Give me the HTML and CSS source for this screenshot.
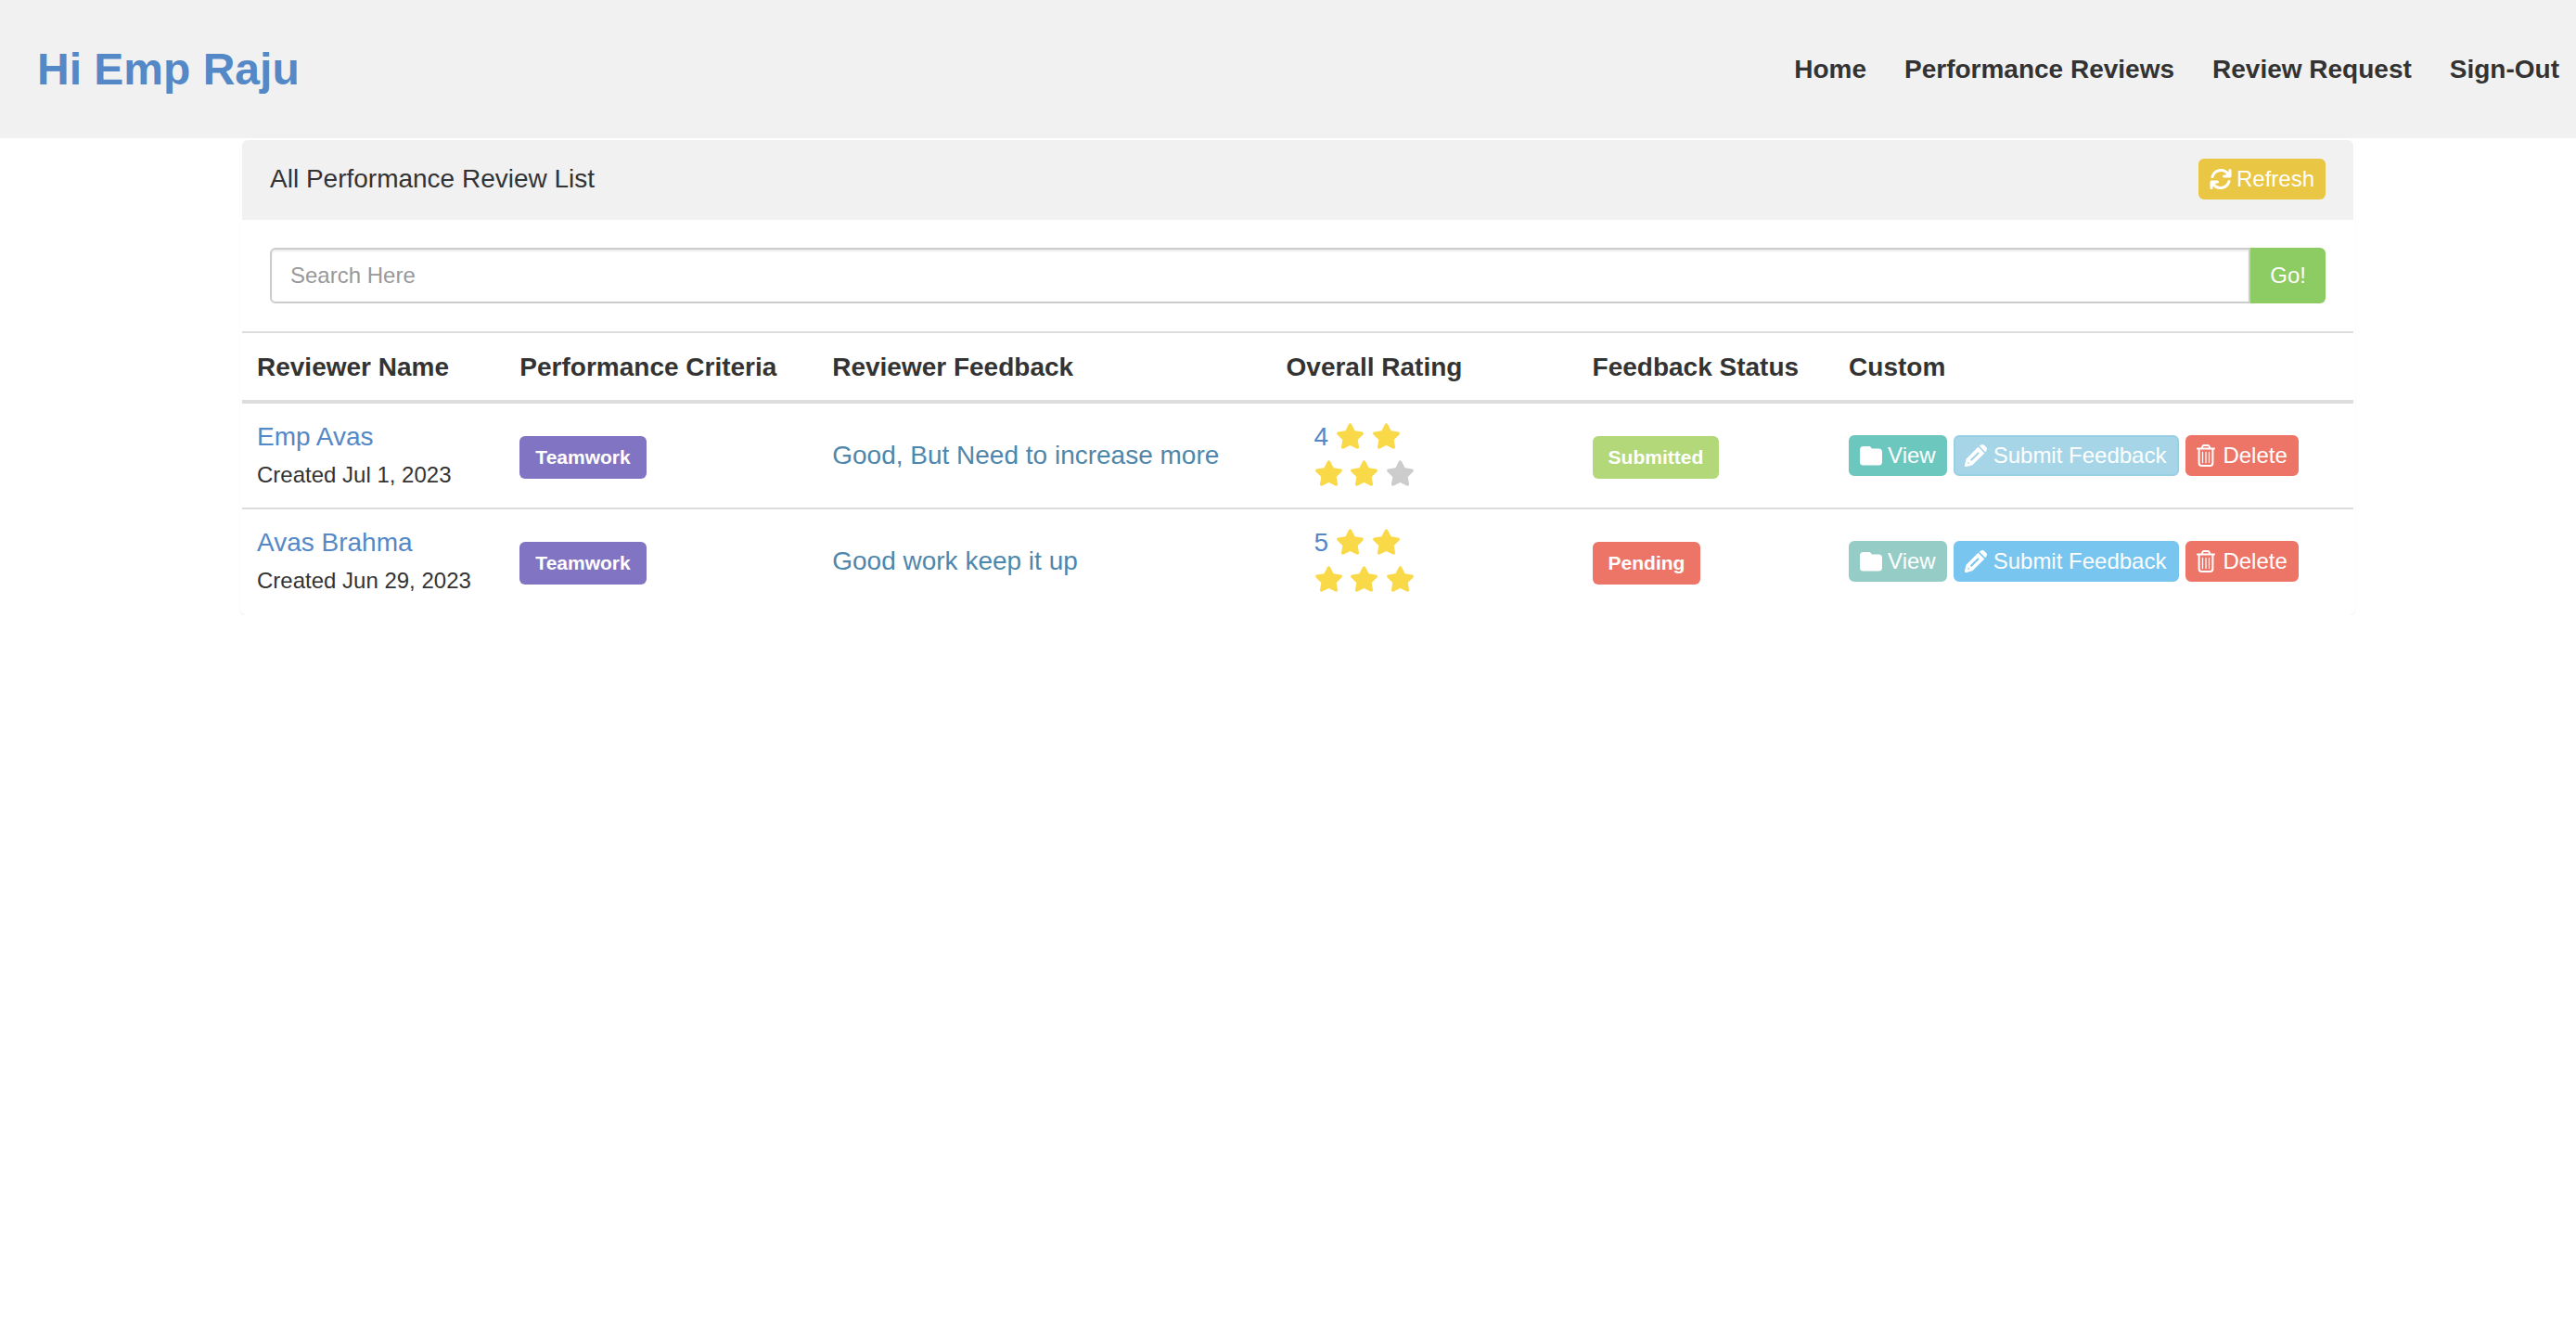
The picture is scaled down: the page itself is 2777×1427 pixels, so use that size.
FILE: index.html
```html
<!DOCTYPE html>
<html lang="en">
<head>
<meta charset="utf-8">
<meta name="viewport" content="width=device-width, initial-scale=1">
<title>Performance Reviews</title>
<link rel="stylesheet" href="styles.css">
</head>
<body>
<svg class="sprite" aria-hidden="true">
  <symbol id="star" viewBox="0 0 576 512"><path d="M259.3 17.8L194 150.2 47.900 171.500c-26.200 3.800-36.700 36.100-17.700 54.600l105.700 103-25 145.500c-4.500 26.300 23.200 46 46.400 33.700L288 439.600l130.700 68.700c23.200 12.200 50.900-7.400 46.400-33.700l-25-145.500 105.700-103c19-18.500 8.500-50.800-17.700-54.600L382 150.200 316.700 17.800c-11.700-23.600-45.600-23.900-57.400 0z"/></symbol>
  <symbol id="folder" viewBox="0 0 25 24"><path d="M4 1.500h6.500q1.200 0 1.800 1l1 1.700H21q4 0 4 4V19q0 4-4 4H4q-4 0-4-4V5.500q0-4 4-4z"/></symbol>
  <symbol id="pencil" viewBox="0 0 24 24"><path fill-rule="evenodd" d="M14.500 2.700L21.300 9.500 8.300 22.300 2 24Q-.3 24.500 0 22L1.600 15.700zM14.200 8.200L5.800 16.500 7.400 17.900 15.700 9.600zM3.600 19.300L3.100 20.900 4.700 20.400 4.900 19.300zM15.800 1.700L17.500 .6Q19.600-.6 21 .7L23.300 3Q24.600 4.500 23.500 6.300L22.300 8.200z"/></symbol>
  <symbol id="trash" viewBox="0 0 20 24"><path d="M1 4.500h18M5.500 4.500L6.400 2Q6.700 1 7.800 1h4.400q1.100 0 1.400 1l.9 2.500M2.600 5v15q0 3 3 3h8.800q3 0 3-3V5" fill="none" stroke="currentColor" stroke-width="2" stroke-linecap="round"/><path d="M6.500 8.500v11M10 8.500v11M13.500 8.500v11" fill="none" stroke="currentColor" stroke-width="1.300" stroke-linecap="round"/></symbol>
  <symbol id="refresh" viewBox="0 0 24 22"><path d="M3 8.500C5 1.500 14.500-1.500 20 5.500M21 13.500C19 20.500 9.500 23.500 4 16.500" fill="none" stroke="currentColor" stroke-width="3" stroke-linecap="round"/><path d="M22 1.500v6.500h-6.500M2 20.500v-6.500h6.500" fill="none" stroke="currentColor" stroke-width="3" stroke-linecap="round" stroke-linejoin="round"/><path d="M22 2v6h-6zM2 20v-6h6z"/></symbol>
</svg>

<header class="topbar">
  <h1 class="greeting">Hi Emp Raju</h1>
  <nav class="nav">
    <a href="#">Home</a>
    <a href="#">Performance Reviews</a>
    <a href="#">Review Request</a>
    <a href="#">Sign-Out</a>
  </nav>
</header>

<main class="content">
  <section class="panel">
    <div class="panel-heading">
      <h2 class="panel-title">All Performance Review List</h2>
      <button type="button" class="btn btn-refresh"><svg class="icon icon-wide" aria-hidden="true"><use href="#refresh"/></svg>Refresh</button>
    </div>
    <form class="search">
      <input class="search-input" type="text" placeholder="Search Here" aria-label="Search reviews">
      <button type="button" class="search-go">Go!</button>
    </form>
    <table class="reviews">
      <colgroup>
        <col class="col-name"><col class="col-criteria"><col class="col-feedback"><col class="col-rating"><col class="col-status"><col>
      </colgroup>
      <thead>
        <tr><th>Reviewer Name</th><th>Performance Criteria</th><th>Reviewer Feedback</th><th>Overall Rating</th><th>Feedback Status</th><th>Custom</th></tr>
      </thead>
      <tbody>
        <tr>
          <td><a href="#">Emp Avas</a><br><small>Created Jul 1, 2023</small></td>
          <td><span class="label label-criteria">Teamwork</span></td>
          <td class="feedback">Good, But Need to increase more</td>
          <td>
            <div class="rating">4
              <svg class="star" aria-hidden="true"><use href="#star"/></svg>
              <svg class="star" aria-hidden="true"><use href="#star"/></svg>
              <svg class="star" aria-hidden="true"><use href="#star"/></svg>
              <svg class="star" aria-hidden="true"><use href="#star"/></svg>
              <svg class="star star-off" aria-hidden="true"><use href="#star"/></svg>
            </div>
          </td>
          <td><span class="label label-submitted">Submitted</span></td>
          <td>
            <div class="actions">
              <button type="button" class="btn btn-view"><svg class="icon icon-wide" aria-hidden="true"><use href="#folder"/></svg>View</button>
              <button type="button" class="btn btn-submit" disabled><svg class="icon icon-wide" aria-hidden="true"><use href="#pencil"/></svg>Submit Feedback</button>
              <button type="button" class="btn btn-delete"><svg class="icon" aria-hidden="true"><use href="#trash"/></svg>Delete</button>
            </div>
          </td>
        </tr>
        <tr>
          <td><a href="#">Avas Brahma</a><br><small>Created Jun 29, 2023</small></td>
          <td><span class="label label-criteria">Teamwork</span></td>
          <td class="feedback">Good work keep it up</td>
          <td>
            <div class="rating">5
              <svg class="star" aria-hidden="true"><use href="#star"/></svg>
              <svg class="star" aria-hidden="true"><use href="#star"/></svg>
              <svg class="star" aria-hidden="true"><use href="#star"/></svg>
              <svg class="star" aria-hidden="true"><use href="#star"/></svg>
              <svg class="star" aria-hidden="true"><use href="#star"/></svg>
            </div>
          </td>
          <td><span class="label label-pending">Pending</span></td>
          <td>
            <div class="actions">
              <button type="button" class="btn btn-view" disabled><svg class="icon icon-wide" aria-hidden="true"><use href="#folder"/></svg>View</button>
              <button type="button" class="btn btn-submit"><svg class="icon icon-wide" aria-hidden="true"><use href="#pencil"/></svg>Submit Feedback</button>
              <button type="button" class="btn btn-delete"><svg class="icon" aria-hidden="true"><use href="#trash"/></svg>Delete</button>
            </div>
          </td>
        </tr>
      </tbody>
    </table>
  </section>
</main>
</body>
</html>
```
FILE: styles.css
```css
* {
  box-sizing: border-box;
}

body {
  margin: 0;
  background: #fff;
  color: #333;
  font-family: "Liberation Sans", Arial, sans-serif;
  font-size: 28px;
  line-height: 40px;
}

a {
  color: #5488c7;
  text-decoration: none;
}

button,
input {
  font-family: inherit;
}

.sprite {
  display: none;
}

/* Top bar */
.topbar {
  display: flex;
  justify-content: space-between;
  align-items: center;
  padding: 47px 18px 46px 40px;
  background: #f1f1f1;
}

.greeting {
  margin: 0;
  color: #5488c7;
  font-size: 48px;
  line-height: 56px;
}

.nav {
  display: flex;
  gap: 41px;
}

.nav a {
  color: #333;
  font-weight: bold;
}

/* Panel */
.content {
  padding: 0 238px 0 259px;
}

.panel {
  border: 2px solid transparent;
  border-radius: 8px;
  box-shadow: 0 2px 2px rgba(0, 0, 0, 0.05);
}

.panel-heading {
  display: flex;
  justify-content: space-between;
  align-items: center;
  padding: 20px 30px 22px;
  border-radius: 6px 6px 0 0;
  background: #f1f1f1;
}

.panel-title {
  margin: 0;
  font-size: 28px;
  font-weight: normal;
}

.search {
  display: flex;
  padding: 30px;
}

.search-input {
  flex: 1;
  height: 60px;
  padding: 0 20px;
  border: 2px solid #ccc;
  border-radius: 6px 0 0 6px;
  background: #fff;
  box-shadow: inset 0 2px 2px rgba(0, 0, 0, 0.075);
  color: #555;
  font-size: 24px;
}

.search-input::placeholder {
  color: #999;
}

.search-go {
  height: 60px;
  padding: 0 21px;
  border: 0;
  border-radius: 0 6px 6px 0;
  background: #8dcb63;
  color: #fff;
  font-size: 24px;
}

/* Table */
.reviews {
  width: 100%;
  border-collapse: separate;
  border-spacing: 0;
  table-layout: fixed;
}

.col-name { width: 12.45%; }
.col-criteria { width: 14.8%; }
.col-feedback { width: 21.5%; }
.col-rating { width: 14.5%; }
.col-status { width: 12.15%; }

.reviews th,
.reviews td {
  padding: 16px;
  text-align: left;
  vertical-align: middle;
}

.reviews th {
  padding: 17px 16px 15px;
  border-top: 2px solid #ddd;
  border-bottom: 4px solid #ddd;
}

.reviews tr + tr td {
  border-top: 2px solid #ddd;
}

.reviews small {
  font-size: 24px;
  line-height: 24px;
}

.feedback {
  color: #4e87ab;
}

.label {
  display: block;
  width: fit-content;
  margin-top: 4px;
  padding: 12px 17px;
  border-radius: 6px;
  color: #fff;
  font-size: 21px;
  font-weight: bold;
  line-height: 22px;
}

.label-criteria { background: #8175c3; }
.label-submitted { background: #b2d87a; }
.label-pending { background: #ed7568; }

.rating {
  width: 156px;
  padding-left: 30px;
  color: #5488c7;
}

.star {
  width: 31px;
  height: 28px;
  fill: #fad949;
  vertical-align: -4px;
}

.star-off {
  fill: #ccc;
}

/* Buttons */
.actions {
  display: flex;
  gap: 7px;
}

.btn {
  display: inline-flex;
  align-items: center;
  gap: 6px;
  height: 44px;
  padding: 0 10px;
  border: 2px solid transparent;
  border-radius: 6px;
  color: #fff;
  font-size: 24px;
  white-space: nowrap;
}

.icon {
  width: 20px;
  height: 24px;
  fill: currentColor;
}

.icon-wide {
  width: 24px;
}

.btn-refresh { gap: 5px; border-color: #e9c643; background: #e9c643; }
.btn-view { border-color: #6cc7bf; background: #6cc7bf; }
.btn-view:disabled { border-color: #96ccc6; background: #96ccc6; }
.btn-submit { gap: 7px; padding: 0 12px 0 10px; border-color: #78c5f0; background: #78c5f0; }
.btn-submit:disabled { border-color: #9bcfe6; background: #a6d5e8; }
.btn-delete { gap: 8px; border-color: #ed7568; background: #ed7568; }
```
